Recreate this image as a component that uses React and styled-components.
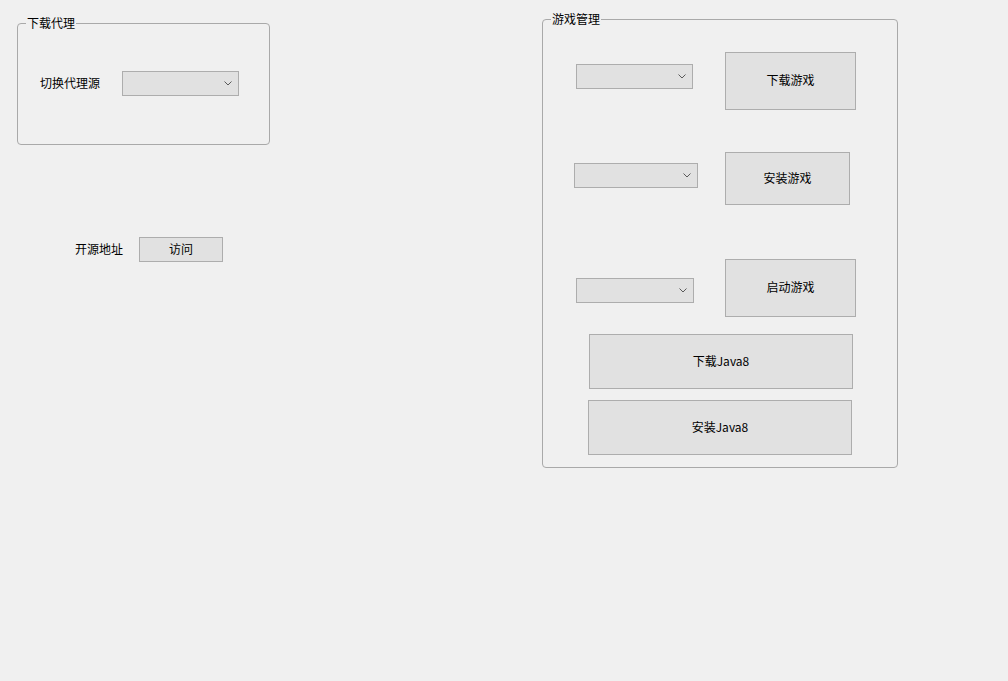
import styled, { createGlobalStyle } from 'styled-components';

const GlobalStyle = createGlobalStyle`
  html, body {
    margin: 0;
    padding: 0;
    background: #f0f0f0;
  }
  body {
    font-family: "Noto Sans CJK SC", "Noto Sans", sans-serif;
    font-size: 12px;
    color: #000;
  }
`

const Form = styled.div`
  display: flex;
  align-items: flex-start;
  width: 1008px;
  height: 681px;
  background: #f0f0f0;
`

const LeftColumn = styled.div`
  display: flex;
  flex-direction: column;
  margin-left: 17px;
  margin-top: 23px;
  width: 253px;
`

const GroupBox = styled.div`
  position: relative;
  box-sizing: border-box;
  width: ${p => p.$width}px;
  height: ${p => p.$height ? `${p.$height}px` : 'auto'};
  margin-top: ${p => p.$top || 0}px;
  margin-left: ${p => p.$left || 0}px;
  border: 1px solid #a9a9a9;
  border-radius: 4px;
  padding: ${p => p.$padding};
`

const Legend = styled.span`
  position: absolute;
  top: -9px;
  left: 8px;
  padding: 0 1px 2px;
  line-height: 16px;
  background: #f0f0f0;
  white-space: nowrap;
`

const Row = styled.div`
  display: flex;
  align-items: center;
  margin-top: ${p => p.$top || 0}px;
  padding-left: ${p => p.$left || 0}px;
`

const Label = styled.span`
  line-height: 16px;
  padding-bottom: 2px;
  margin-right: ${p => p.$gap}px;
  white-space: nowrap;
`

const ComboBox = styled.div`
  position: relative;
  box-sizing: border-box;
  width: ${p => p.$width}px;
  height: 25px;
  margin-left: ${p => p.$left || 0}px;
  margin-top: ${p => p.$top || 0}px;
  background: #e1e1e1;
  border: 1px solid #adadad;
`

const Chevron = styled.svg`
  position: absolute;
  right: 6px;
  top: 9px;
`

const Button = styled.div`
  box-sizing: border-box;
  display: flex;
  align-items: center;
  justify-content: center;
  width: ${p => p.$width}px;
  height: ${p => p.$height}px;
  margin-top: ${p => p.$top || 0}px;
  margin-left: ${p => p.$left || 0}px;
  padding-bottom: 2px;
  line-height: 16px;
  background: #e1e1e1;
  border: 1px solid #adadad;
  white-space: nowrap;
`

const GameGroup = styled(GroupBox)`
  display: flex;
  flex-direction: column;
`

const GameRow = styled.div`
  display: grid;
  grid-template-columns: 182px auto;
  align-items: start;
  margin-top: ${p => p.$top}px;
`

const Select = ({ width, left, top }) => (
  <ComboBox $width={width} $left={left} $top={top}>
    <Chevron width="8" height="5" viewBox="0 0 8 5">
      <polyline points="0.5,0.5 4,4 7.5,0.5" fill="none" stroke="#5a5a5a" strokeWidth="1" />
    </Chevron>
  </ComboBox>
)

const games = [
  { top: 32, combo: { width: 117, left: 33, top: 12 }, button: { width: 131, height: 58 }, text: '下载游戏' },
  { top: 42, combo: { width: 124, left: 31, top: 11 }, button: { width: 125, height: 53 }, text: '安装游戏' },
  { top: 54, combo: { width: 118, left: 33, top: 19 }, button: { width: 131, height: 58 }, text: '启动游戏' },
]

export default function App() {
  return (
    <>
      <GlobalStyle />
      <Form>
        <LeftColumn>
          <GroupBox $width={253} $height={122} $padding="0">
            <Legend>下载代理</Legend>
            <Row $top={47} $left={22}>
              <Label $gap={22}>切换代理源</Label>
              <Select width={117} />
            </Row>
          </GroupBox>
          <Row $top={92} $left={58}>
            <Label $gap={16}>开源地址</Label>
            <Button $width={84} $height={25}>访问</Button>
          </Row>
        </LeftColumn>

        <GameGroup $width={356} $top={19} $left={272} $padding="0 0 12px 0">
          <Legend>游戏管理</Legend>
          {games.map(g => (
            <GameRow key={g.text} $top={g.top}>
              <Select width={g.combo.width} left={g.combo.left} top={g.combo.top} />
              <Button $width={g.button.width} $height={g.button.height}>{g.text}</Button>
            </GameRow>
          ))}
          <Button $width={264} $height={55} $top={17} $left={46}>下载Java8</Button>
          <Button $width={264} $height={55} $top={11} $left={45}>安装Java8</Button>
        </GameGroup>
      </Form>
    </>
  );
}
